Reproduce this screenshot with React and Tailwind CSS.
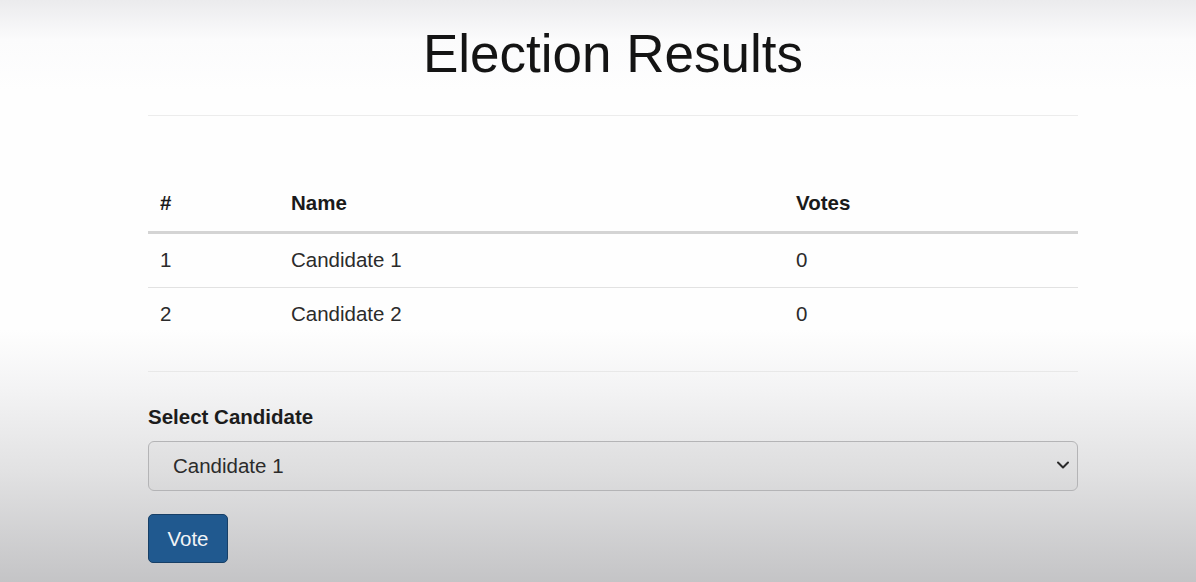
import { useState } from "react";

const candidates = [
  { id: 1, name: "Candidate 1", votes: 0 },
  { id: 2, name: "Candidate 2", votes: 0 },
];

export default function App() {
  const [selected, setSelected] = useState(1);

  return (
    <div className="min-h-[582px] font-['Liberation_Sans',Arial,sans-serif] text-[#2b2b2b] bg-[linear-gradient(to_bottom,#ebebed_0px,#fbfbfc_40px,#fefefe_90px,#fefefe_330px,#f3f3f4_390px,#e2e2e3_470px,#c4c4c6_582px)]">
      <div className="ml-[148px] w-[930px] pt-[25px] pb-[18px]">
        <h1 className="text-center text-[53px] leading-[58px] text-[#141414]">Election Results</h1>
        <hr className="mt-[32px] border-0 border-t border-[#ececec]" />

        <table className="mt-[62px] w-full text-[20.5px] leading-[29px]">
          <thead>
            <tr className="border-b-[3px] border-[#d4d4d4]">
              <th className="w-[131px] px-[12px] pt-[10px] pb-[14px] text-left font-bold text-[#1a1a1a]">#</th>
              <th className="w-[505px] px-[12px] pt-[10px] pb-[14px] text-left font-bold text-[#1a1a1a]">Name</th>
              <th className="px-[12px] pt-[10px] pb-[14px] text-left font-bold text-[#1a1a1a]">Votes</th>
            </tr>
          </thead>
          <tbody>
            {candidates.map((c, i) => (
              <tr key={c.id} className={i > 0 ? "border-t border-[#e2e2e2]" : ""}>
                <td className="px-[12px] pt-[11px] pb-[13px]">{c.id}</td>
                <td className="px-[12px] pt-[11px] pb-[13px]">{c.name}</td>
                <td className="px-[12px] pt-[11px] pb-[13px]">{c.votes}</td>
              </tr>
            ))}
          </tbody>
        </table>

        <hr className="mt-[30px] border-0 border-t border-[#e8e8e8]" />

        <label className="mt-[30px] block text-[20.5px] leading-[29px] font-bold text-[#1c1c1c]">
          Select Candidate
        </label>
        <div className="relative mt-[10px]">
          <select
            value={selected}
            onChange={(e) => setSelected(Number(e.target.value))}
            className="block h-[50px] w-full appearance-none rounded-[6px] border border-[#b4b4b6] bg-black/[0.015] pl-[24px] text-[20.5px] text-[#2b2b2b] outline-none"
          >
            {candidates.map((c) => (
              <option key={c.id} value={c.id}>{c.name}</option>
            ))}
          </select>
          <svg
            className="pointer-events-none absolute right-[8px] top-[19px]"
            width="14"
            height="10"
            viewBox="0 0 14 10"
            fill="none"
          >
            <path d="M2 2.5 L7 7.5 L12 2.5" stroke="#2a2a2a" strokeWidth="2" strokeLinecap="round" strokeLinejoin="round" />
          </svg>
        </div>

        <button className="mt-[23px] h-[49px] w-[80px] rounded-[5px] border border-[#173f66] bg-[#20598f] pt-[1px] text-[20.5px] text-[#f2f4f6]">
          Vote
        </button>
      </div>
    </div>
  );
}
